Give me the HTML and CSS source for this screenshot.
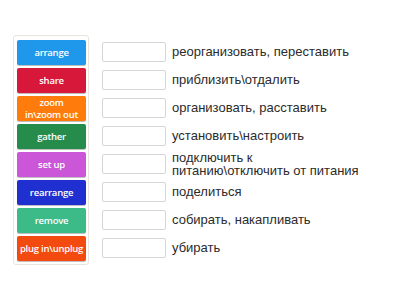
FILE: index.html
```html
<!DOCTYPE html>
<html lang="ru">
<head>
  <meta charset="UTF-8" />
  <title>Match up</title>
  <link rel="stylesheet" href="styles.css">
</head>
<body>
  <div class="board">
    <div class="tiles">
      <div class="tile blue">arrange</div>
      <div class="tile crimson">share</div>
      <div class="tile orange">zoom<br>in\zoom out</div>
      <div class="tile green">gather</div>
      <div class="tile violet">set up</div>
      <div class="tile navy">rearrange</div>
      <div class="tile teal">remove</div>
      <div class="tile red">plug in\unplug</div>
    </div>

    <ul class="targets">
      <li><span class="slot"></span><span class="def">реорганизовать, переставить</span></li>
      <li><span class="slot"></span><span class="def">приблизить\отдалить</span></li>
      <li><span class="slot"></span><span class="def">организовать, расставить</span></li>
      <li><span class="slot"></span><span class="def">установить\настроить</span></li>
      <li><span class="slot"></span><span class="def">подключить к питанию\отключить от питания</span></li>
      <li><span class="slot"></span><span class="def">поделиться</span></li>
      <li><span class="slot"></span><span class="def">собирать, накапливать</span></li>
      <li><span class="slot"></span><span class="def">убирать</span></li>
    </ul>
  </div>
</body>
</html>
```

FILE: styles.css
```css
body {
  margin: 0;
  background: #fff;
  font-family: "Liberation Sans", Arial, sans-serif;
}

.board {
  display: flex;
  align-items: flex-start;
  padding: 35px 0 0 13px;
}

.tiles {
  display: flex;
  flex-direction: column;
  gap: 3px;
  width: 69px;
  padding: 4px 2px 3px 3px;
  border: 1px solid #e9e4dc;
  border-radius: 3px;
  box-sizing: content-box;
}

.tile {
  height: 25px;
  padding: 0 1px;
  display: flex;
  align-items: center;
  justify-content: center;
  text-align: center;
  white-space: nowrap;
  color: #fff;
  font-family: "Open Sans", Lato, sans-serif;
  font-size: 9.5px;
  font-weight: 600;
  line-height: 11.5px;
  letter-spacing: -0.25px;
  border-radius: 2px;
  box-shadow: 0 1px 0 rgba(0, 0, 0, 0.25);
}

.blue { background: #1f97ea; }
.crimson { background: #d8183b; }
.orange { background: #ff7b0c; }
.green { background: #268c4b; }
.violet { background: #cb56d8; }
.navy { background: #1f2fd0; }
.teal { background: #3cba88; }
.red { background: #f24a0f; }

.targets {
  list-style: none;
  margin: 0;
  padding: 4px 0 0 13px;
  display: flex;
  flex-direction: column;
  gap: 3px;
}

.targets li {
  height: 25px;
  display: flex;
  align-items: center;
  gap: 6px;
}

.slot {
  flex: none;
  width: 62px;
  height: 18px;
  border: 1px solid #d6d6d6;
  border-radius: 2px;
}

.def {
  width: 196px;
  font-size: 13px;
  line-height: 13px;
  color: #2b2b2b;
}
```
